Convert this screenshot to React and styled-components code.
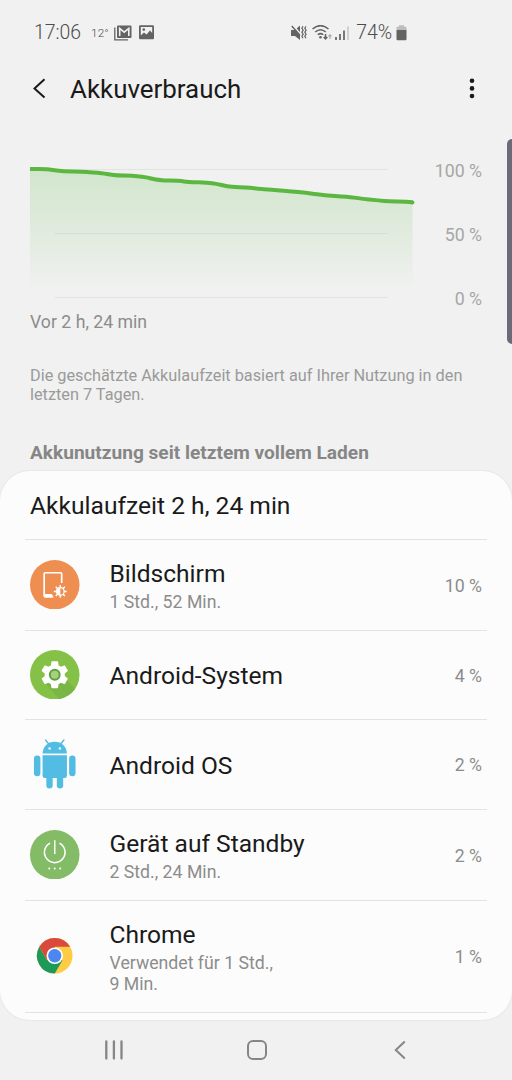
import styled, { createGlobalStyle } from "styled-components"

const GlobalStyle = createGlobalStyle`
    body {
        margin: 0;
        background: #f1f1f1;
        font-family: Roboto, "Liberation Sans", sans-serif;
    }
`

const PageContainer = styled.div`
    position: relative;
    display: flex;
    flex-direction: column;
    width: 512px;
    height: 1080px;
    background: #f1f1f1;
    box-sizing: border-box;
    overflow: hidden;
`

const StatusBar = styled.div`
    display: flex;
    flex-shrink: 0;
    align-items: center;
    justify-content: space-between;
    height: 65px;
    padding: 0 105px 0 34px;
    box-sizing: border-box;
    color: #4c4c4c;
`

const StatusGroup = styled.div`
    display: flex;
    align-items: center;
`

const StatusText = styled.span`
    font-size: ${(props) => props.$size || "19.4px"};
    font-weight: 300;
    line-height: 24px;
    white-space: nowrap;
    margin-right: ${(props) => props.$gap || 0};
`

const StatusIcon = styled.svg`
    display: block;
    flex-shrink: 0;
    margin-right: ${(props) => props.$gap || 0};
`

const TitleBar = styled.header`
    display: flex;
    flex-shrink: 0;
    align-items: center;
    height: 48px;
    padding: 0 36px 0 30px;
    box-sizing: border-box;
`

const IconButton = styled.button`
    display: flex;
    align-items: center;
    justify-content: center;
    padding: 0;
    border: none;
    background: none;
    cursor: pointer;
`

const TitleText = styled.h1`
    flex: 1;
    margin: 0 0 0 21px;
    font-size: 25.9px;
    line-height: 34px;
    font-weight: 400;
    color: #1a1a1a;
`

const ChartSection = styled.section`
    display: flex;
    flex-shrink: 0;
    justify-content: space-between;
    height: 162px;
    margin-top: 37px;
    padding: 0 30px;
`

const ScaleList = styled.div`
    display: flex;
    flex-direction: column;
    justify-content: space-between;
    height: 148px;
    margin-top: 11px;
`

const ScaleText = styled.span`
    font-size: 17.7px;
    line-height: 20px;
    text-align: right;
    color: #a6a6a6;
`

const TimeText = styled.p`
    margin: 0;
    padding-left: 30px;
    font-size: 17.7px;
    line-height: 20px;
    color: #8c8c8c;
`

const HintText = styled.p`
    margin: 34px 30px 0;
    font-size: 16.3px;
    line-height: 19px;
    color: #9a9a9a;
`

const SectionTitle = styled.h2`
    margin: 37px 30px 0;
    font-size: 19.1px;
    line-height: 24px;
    font-weight: 700;
    color: #868686;
`

const Card = styled.main`
    flex-shrink: 0;
    height: 549px;
    margin-top: 6px;
    padding: 0 25px;
    border-radius: 30px;
    box-sizing: border-box;
    background: #fcfcfc;
    box-shadow: 0 0 1px 1px rgba(0, 0, 0, 0.04);
`

const CardTitle = styled.h2`
    margin: 0;
    padding: 0 5px;
    height: 69px;
    box-sizing: border-box;
    border-bottom: 1px solid #e3e3e3;
    font-size: 24.6px;
    line-height: 70px;
    font-weight: 400;
    color: #1a1a1a;
`

const UsageRow = styled.div`
    display: flex;
    align-items: center;
    height: ${(props) => props.$height}px;
    padding: 2px 5px 0;
    box-sizing: border-box;
    border-bottom: 1px solid #e3e3e3;
`

const AppIcon = styled.svg`
    display: block;
    flex-shrink: 0;
    width: 49.5px;
    height: 49.5px;
    margin-right: 30px;
    margin-bottom: 3px;
`

const UsageInfo = styled.div`
    flex: 1;
`

const AppName = styled.div`
    font-size: 24.55px;
    line-height: 32px;
    color: #1a1a1a;
`

const AppTime = styled.div`
    width: 174px;
    margin-top: 2px;
    padding-bottom: 2px;
    font-size: 17.7px;
    line-height: 21px;
    color: #8c8c8c;
`

const PercentText = styled.span`
    font-size: 17.7px;
    line-height: 21px;
    color: #8c8c8c;
`

const NavBar = styled.nav`
    display: flex;
    flex: 1;
    align-items: center;
    justify-content: space-between;
    padding: 0 104px;
`

/* edge panel handle, floats over the right screen border */
const EdgeHandle = styled.div`
    position: absolute;
    top: 139px;
    right: 0;
    width: 5px;
    height: 205px;
    border-radius: 5px 0 0 5px;
    background: #6c6a76;
`

const LINE = "M0 19C8 19 11 18.6 17 19.3S27 21 34 21.3S50 21.4 57 22S71 22.6 77 24S88 25.4 95 25.6S110 26.2 116 27.4S128 30.3 135 30.5S148 30.6 154 31.4S174 32.4 182 33.2S194 36.3 202 36.8S213 37 220 37.8S256 41 268 42.1S284 44 293 45S314 46 324 47.6S343 49.8 354 50.9S372 50.6 382.5 52.3"

const BatteryChart = () => (
    <svg width="386" height="152" viewBox="0 0 386 152">
        <defs>
            <linearGradient id="fill" x1="0" y1="19" x2="0" y2="142" gradientUnits="userSpaceOnUse">
                <stop offset="0" stopColor="#54b93c" stopOpacity="0.2" />
                <stop offset="0.4" stopColor="#54b93c" stopOpacity="0.13" />
                <stop offset="1" stopColor="#54b93c" stopOpacity="0" />
            </linearGradient>
        </defs>
        <path d="M25 19.5H358M25 83.5H358M25 147.5H358" stroke="#e2e4e2" strokeWidth="1.2" />
        <path d={LINE + "V147H0Z"} fill="url(#fill)" />
        <path d={LINE} fill="none" stroke="#5cb740" strokeWidth="4" />
        <circle cx="382.4" cy="52.4" r="2" fill="#5cb740" />
    </svg>
)

const ScreenIcon = () => (
    <AppIcon viewBox="0 0 50 50">
        <circle cx="25" cy="25" r="25" fill="#ee8e50" />
        <path d="M32 23.2V13.9Q32 12.9 31 12.9H15.3Q14.3 12.9 14.3 13.9V36Q14.3 37 15.3 37H23" fill="none" stroke="#fff" strokeWidth="1.7" />
        <path d="M14.3 34.4H22L24 37.8H14.3Z" fill="#fff" />
        <circle cx="30.6" cy="31.7" r="3.9" fill="none" stroke="#fff" strokeWidth="1.3" />
        <path d="M30.6 27.8A3.9 3.9 0 0 0 30.6 35.6Z" fill="#fff" />
        <path d="M30.6 25.2V28M30.6 35.4V38.2M24.1 31.7H27M34.2 31.7H37.1M26 27.1L28 29.1M33.2 34.3L35.2 36.3M26 36.3L28 34.3M33.2 29.1L35.2 27.1" stroke="#fff" strokeWidth="1.5" />
    </AppIcon>
)

const SystemIcon = () => (
    <AppIcon viewBox="0 0 50 50">
        <clipPath id="disc"><circle cx="25" cy="25" r="25" /></clipPath>
        <circle cx="25" cy="25" r="25" fill="#84c146" />
        <path d="M15 33L37 30L46 40L38 52H32Z" fill="#79b646" clipPath="url(#disc)" />
        <g transform="translate(8 8) scale(1.415)" fill="#fff">
            <path d="M19.14 12.94c.04-.3.06-.61.06-.94s-.02-.64-.07-.94l2.03-1.58a.49.49 0 0 0 .12-.61l-1.92-3.32a.49.49 0 0 0-.59-.22l-2.39.96a7 7 0 0 0-1.62-.94l-.36-2.54A.48.48 0 0 0 13.92 2.4h-3.84a.48.48 0 0 0-.47.41l-.36 2.54a7.4 7.4 0 0 0-1.62.94l-2.39-.96a.48.48 0 0 0-.59.22L2.74 8.87a.48.48 0 0 0 .12.61l2.03 1.58a6 6 0 0 0-.02 1.88l-2.03 1.58a.49.49 0 0 0-.12.61l1.92 3.32c.12.22.37.29.59.22l2.39-.96c.5.38 1.03.7 1.62.94l.36 2.54c.05.24.24.41.48.41h3.84c.24 0 .44-.17.47-.41l.36-2.54a7.1 7.1 0 0 0 1.62-.94l2.39.96c.22.08.47 0 .59-.22l1.92-3.32a.48.48 0 0 0-.12-.61z" />
        </g>
        <circle cx="25" cy="25" r="5" fill="#a5d278" stroke="#5f9f45" strokeWidth="2" />
    </AppIcon>
)

const AndroidIcon = () => (
    <AppIcon viewBox="0 0 50 50" fill="#52bce2">
        <path d="M15.7 1L19 5M34.3 1L31 5" stroke="#52bce2" strokeWidth="1.4" strokeLinecap="round" />
        <path d="M12.7 14.7C13 7.5 18 2.8 25 2.8S37 7.5 37.3 14.7Z" />
        <circle cx="19.8" cy="9.5" r="1.2" fill="#fff" />
        <circle cx="30.2" cy="9.5" r="1.2" fill="#fff" />
        <path d="M12.7 16.4H37.3V37Q37.3 39.3 35 39.3H15Q12.7 39.3 12.7 37Z" />
        <rect x="4" y="16.7" width="6.5" height="20.8" rx="3.2" />
        <rect x="39.5" y="16.7" width="6.5" height="20.8" rx="3.2" />
        <rect x="16.5" y="34" width="6.4" height="16" rx="3.2" />
        <rect x="27.1" y="34" width="6.4" height="16" rx="3.2" />
    </AppIcon>
)

const StandbyIcon = () => (
    <AppIcon viewBox="0 0 50 50">
        <circle cx="25" cy="25" r="25" fill="#83bb67" />
        <path d="M25 10.3V24.3M20.3 13.3A10.4 10.4 0 1 0 29.7 13.3" fill="none" stroke="#fff" strokeWidth="1.5" />
        <g fill="#fff">
            <circle cx="19.5" cy="39" r="1" />
            <circle cx="25" cy="39" r="1" />
            <circle cx="30.5" cy="39" r="1" />
        </g>
    </AppIcon>
)

const ChromeIcon = () => (
    <AppIcon viewBox="0 0 50 50">
        <circle cx="25" cy="25" r="18" fill="#fdcc42" />
        <path d="M25 25L9.4 16A18 18 0 0 1 40.6 16H25Z" fill="#d94a3d" />
        <path d="M9.4 16A18 18 0 0 0 25 43L32.8 29.5L25 25L17.2 29.5Z" fill="#1d9a57" />
        <path d="M9.4 16L17.2 29.5L25 25V16Z" fill="#d94a3d" />
        <circle cx="25" cy="25" r="8.4" fill="#fff" />
        <circle cx="25" cy="25" r="6.7" fill="#4c86ee" />
    </AppIcon>
)

const usageList = [
    { name: "Bildschirm", time: "1 Std., 52 Min.", percent: "10 %", height: 91, Icon: ScreenIcon },
    { name: "Android-System", percent: "4 %", height: 89, Icon: SystemIcon },
    { name: "Android OS", percent: "2 %", height: 90, Icon: AndroidIcon },
    { name: "Gerät auf Standby", time: "2 Std., 24 Min.", percent: "2 %", height: 91, Icon: StandbyIcon },
    { name: "Chrome", time: "Verwendet für 1 Std., 9 Min.", percent: "1 %", height: 112, Icon: ChromeIcon },
]

export default function App(){

    return(
        <>
            <GlobalStyle/>
            <PageContainer>
                <StatusBar>
                    <StatusGroup>
                        <StatusText $gap="10px">17:06</StatusText>
                        <StatusText $size="11.8px" $gap="5px">12°</StatusText>
                        <StatusIcon width="18" height="16" viewBox="0 0 18 16" $gap="7px">
                            <path d="M.8 2.5V14.8H14" fill="none" stroke="#636363" strokeWidth="1.3" />
                            <rect x="3" y="0.5" width="14.5" height="12.5" rx="1" fill="#636363" />
                            <path d="M5.7 11V3.5L10.2 7.2L14.8 3.5V11" fill="none" stroke="#f1f1f1" strokeWidth="1.6" />
                        </StatusIcon>
                        <StatusIcon width="15" height="15" viewBox="0 0 15 15">
                            <rect x="0" y="0.3" width="15" height="14" rx="1.2" fill="#636363" />
                            <path d="M1.8 10.5L5 7.5L7.5 9.5L11 5.5L13.2 8V2H1.8Z" fill="#f1f1f1" />
                            <circle cx="4.8" cy="4.6" r="1.3" fill="#636363" />
                        </StatusIcon>
                    </StatusGroup>
                    <StatusGroup>
                        <StatusIcon width="16" height="16" viewBox="0 0 16 16" $gap="5px">
                            <path d="M0 5H4L9 0.5V15L4 11H0Z" fill="#636363" />
                            <path d="M2 0.5L11 10.5" stroke="#f1f1f1" strokeWidth="1.6" />
                            <path d="M0.8 1L9 10.5" stroke="#636363" strokeWidth="1.4" />
                            <path d="M12 1.3L10.9 3.2L12.2 5.2L10.9 7.2L12.2 9.2L10.9 11.2L12 13.2M15 1.3L13.8 3.2L15.1 5.2L13.8 7.2L15.1 9.2L13.8 11.2L15 13.2" fill="none" stroke="#636363" strokeWidth="1.2" />
                        </StatusIcon>
                        <StatusIcon width="20" height="16" viewBox="0 0 20 16" $gap="3px">
                            <g fill="none" stroke="#636363" strokeWidth="1.5">
                                <path d="M0.5 4Q8.5 -2.8 16.5 4" />
                                <path d="M3.2 7Q8.5 2.4 13.8 7" />
                                <path d="M5.8 9.8Q8.5 7.4 11.2 9.8" />
                                <path d="M13.5 9V13.5M11.7 12L13.5 14L15.3 12" />
                            </g>
                            <circle cx="8.5" cy="12.2" r="1.3" fill="#636363" />
                            <path d="M18 14V10M16.5 11.3L18 9.7L19.5 11.3" fill="none" stroke="#a5a5a5" strokeWidth="1.1" />
                        </StatusIcon>
                        <StatusIcon width="14" height="16" viewBox="0 0 14 16" $gap="7px">
                            <path d="M1 12V15M5 9V15M9 5.5V15" stroke="#636363" strokeWidth="1.7" />
                            <path d="M13 1.5V15" stroke="#c4c4c4" strokeWidth="1.5" />
                        </StatusIcon>
                        <StatusText $gap="4px">74%</StatusText>
                        <StatusIcon width="11" height="16" viewBox="0 0 11 16">
                            <path d="M0.5 5V2.8Q.5 1.8 1.5 1.8H3V0.3H8V1.8H9.5Q10.5 1.8 10.5 2.8V5Z" fill="#bdbdbd" />
                            <path d="M0.5 5H10.5V14Q10.5 15.3 9.5 15.3H1.5Q.5 15.3 .5 14Z" fill="#636363" />
                        </StatusIcon>
                    </StatusGroup>
                </StatusBar>
                <TitleBar>
                    <IconButton aria-label="Zurück">
                        <svg width="19" height="22" viewBox="0 0 19 22">
                            <path d="M14.5 1.3L4.5 10.4L14.5 19.5" fill="none" stroke="#1a1a1a" strokeWidth="2" />
                        </svg>
                    </IconButton>
                    <TitleText>Akkuverbrauch</TitleText>
                    <IconButton aria-label="Mehr">
                        <svg width="8" height="22" viewBox="0 0 8 22" fill="#1a1a1a">
                            <circle cx="4" cy="2.8" r="2.3" />
                            <circle cx="4" cy="10.4" r="2.3" />
                            <circle cx="4" cy="18" r="2.3" />
                        </svg>
                    </IconButton>
                </TitleBar>
                <ChartSection>
                    <BatteryChart/>
                    <ScaleList>
                        <ScaleText>100 %</ScaleText>
                        <ScaleText>50 %</ScaleText>
                        <ScaleText>0 %</ScaleText>
                    </ScaleList>
                </ChartSection>
                <TimeText>Vor 2 h, 24 min</TimeText>
                <HintText>
                    Die geschätzte Akkulaufzeit basiert auf Ihrer Nutzung in den letzten 7 Tagen.
                </HintText>
                <SectionTitle>Akkunutzung seit letztem vollem Laden</SectionTitle>
                <Card>
                    <CardTitle>Akkulaufzeit 2 h, 24 min</CardTitle>
                    {usageList.map(({ name, time, percent, height, Icon }) => (
                        <UsageRow key={name} $height={height}>
                            <Icon/>
                            <UsageInfo>
                                <AppName>{name}</AppName>
                                {time && <AppTime>{time}</AppTime>}
                            </UsageInfo>
                            <PercentText>{percent}</PercentText>
                        </UsageRow>
                    ))}
                </Card>
                <NavBar>
                    <IconButton aria-label="Letzte Apps">
                        <svg width="20" height="20" viewBox="0 0 20 20">
                            <path d="M2.3 1.5V18.5M9.9 1.5V18.5M17.5 1.5V18.5" stroke="#868686" strokeWidth="2.3" strokeLinecap="round" />
                        </svg>
                    </IconButton>
                    <IconButton aria-label="Startseite">
                        <svg width="22" height="22" viewBox="0 0 22 22">
                            <rect x="2" y="2" width="18" height="18" rx="5" fill="none" stroke="#868686" strokeWidth="2" />
                        </svg>
                    </IconButton>
                    <IconButton aria-label="Zurück">
                        <svg width="18" height="20" viewBox="0 0 18 20">
                            <path d="M14.8 1.5L5.8 10L14.8 18.5" fill="none" stroke="#868686" strokeWidth="2" />
                        </svg>
                    </IconButton>
                </NavBar>
                <EdgeHandle/>
            </PageContainer>
        </>
    )
}
